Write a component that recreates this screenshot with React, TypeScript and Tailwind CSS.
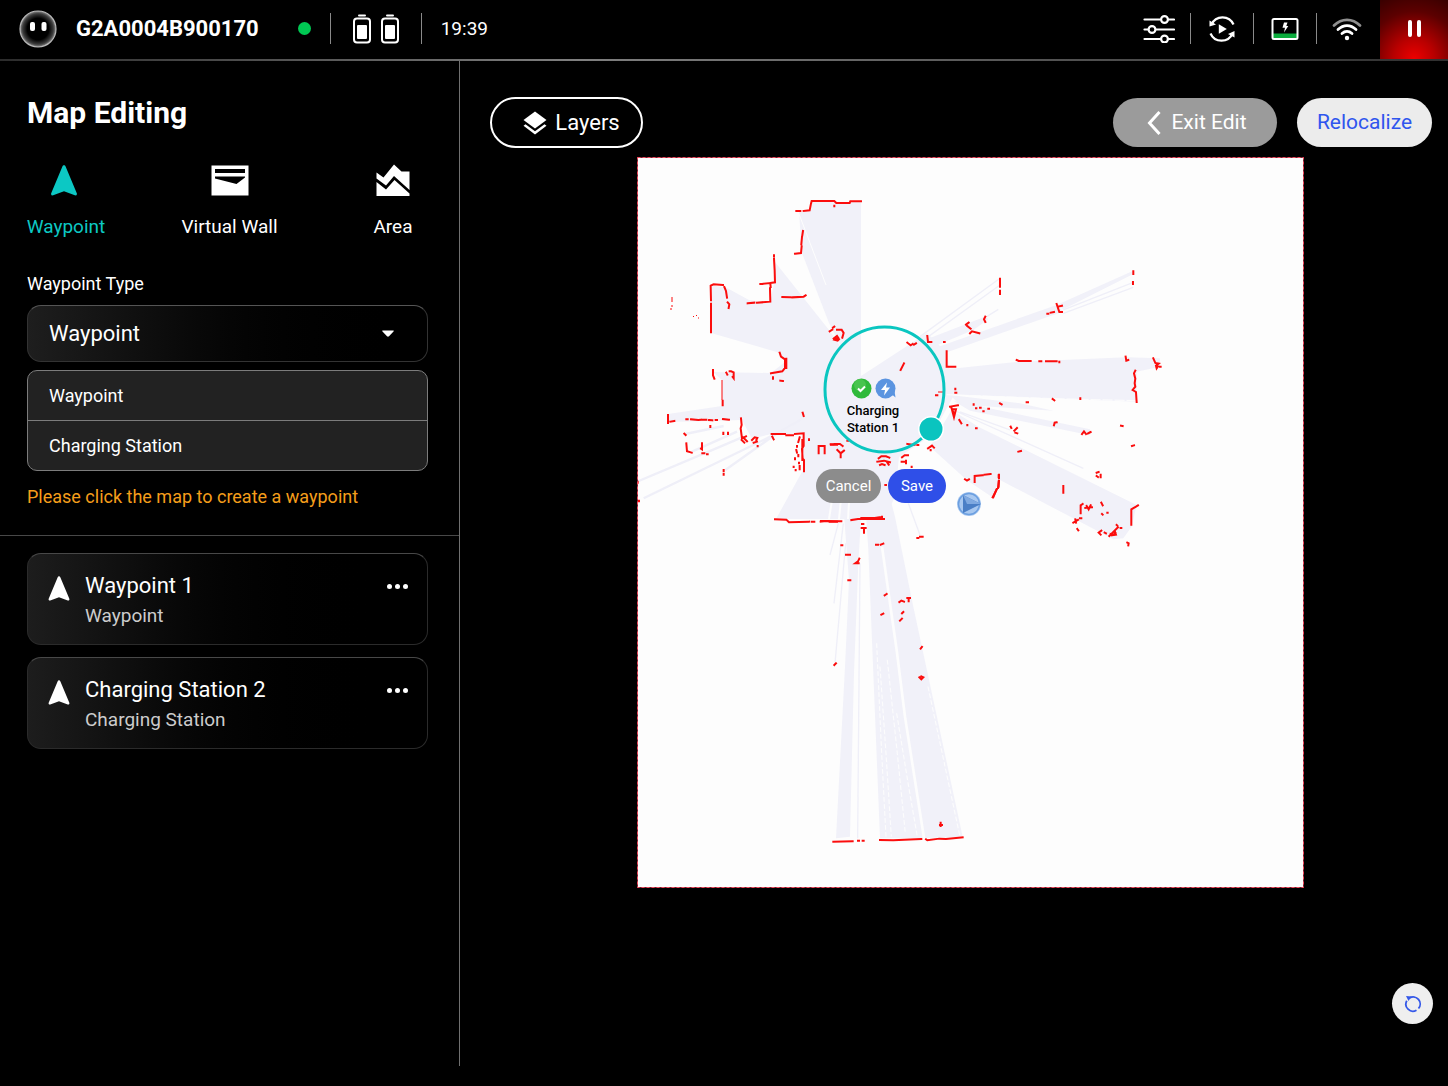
import React, { useState } from "react";

const tabs = ["Waypoint", "Virtual Wall", "Area"];

const waypoints = [
  { name: "Waypoint 1", type: "Waypoint" },
  { name: "Charging Station 2", type: "Charging Station" },
];

// laser hits, one entry per map tile, drawn at a third of their units
const hits = [
  {
    at: "translate(0 0) scale(0.3333)",
    d: "M478 162h12M500 162L518 160L522 140L524 132L592 132L598 138L638 138L640 133L672 133M592 146v2M498 222L496 235M495 240L493 262M494 268L492 288L474 290M411 295v2M411 304L413 340L414 376L400 378M370 381h6M380 380L400 378L401 390M399 394L400 434L360 437M352 437L332 439M436 420L460 421M466 421L500 419L506 415M222 440v86M222 430L221 386L230 382L258 384M262 390L267 402L270 422M272 436L277 442L275 453M578 523l8 -5M588 512l4 -3M600 518h14l6 10l-4 14M590 545l10 -8l4 6l-10 6l8 2l4 -4",
  },
  {
    at: "translate(0 183) scale(0.3333)",
    d: "M228 90v16l4 10M268 98l3 6M278 94h2M285 95l5 2v18l-3 -4M257 182v14M93 225v24M100 245l12 -2M148 238h4M162 238l22 2l8 -1M198 239h10M216 240l10 1M236 240h4M258 237l18 2M220 258v3M142 281l4 4M259 278v4M273 278v4M148 310l2 24l14 4M195 310v18l-3 -2M196 340l6 0M210 343h2M312 235l2 20l-3 10l4 30l12 -6M314 300l8 8M318 292l12 12M345 300l8 -8l8 2l-3 6M350 308l10 -3M362 318v1M260 390v4M260 402v2M404 282h40M448 286h20M474 282l26 -2v38l-5 8l2 30l4 4v34M496 300v60M406 290l4 8M488 292l-4 14M480 318v2M478 330l2 8M484 345v4M474 355v3M486 368v2M470 380v1M476 390v1M488 378v10M497 218l3 10M516 298v2M545 340v-22h18v22M582 314h18M428 38l4 12l12 8v26l-8 10l-34 6M448 56v28M444 60v24M408 112v4M430 122l8 1M414 538l34 1l8 8l60 -2M524 545h8M552 543h20M578 545h22M2 425v3M6 482v2",
  },
  {
    at: "translate(163 153) scale(0.3333)",
    d: "M322 98l10 8l6 -4M342 104l6 -4M302 180l10 -20M440 124v46l26 0M408 256h4M466 236v2M466 248h3M450 290l24 -4M454 292l8 30l6 -24l-12 0l6 12M478 330l6 10M502 345v1M528 355h2M92 403h8M104 402h16l8 6M112 420l10 10l10 -8M122 432v10M142 392h2M322 402l16 2h6M352 405h3M384 415l12 -8l6 6M392 420v1M236 445l8 -6h14l10 4M232 455l20 -3l18 5M240 465l6 -3l8 3M262 458l4 6M306 442l8 -6h10M305 455h8M318 452v8M335 470v1M256 525h2M495 508l6 4l6 -4M524 516v-18l24 -2M554 494l18 -2M597 494v10M596 514l-2 20M590 538l-10 24",
  },
  {
    at: "translate(283 93) scale(0.3333)",
    d: "M22 258l2 18h10M240 86v24M240 122v10M196 200l-4 8l4 8M138 224l8 -6M142 228l10 8M150 250l6 -6l22 6M382 191h3M392 188l10 -2M410 162l8 24l8 0M414 170l12 -3M640 64v8M639 96v6M290 330l6 3h36M358 334h6M378 334h32M418 335v2M617 320l2 12l6 -2M700 325l6 14l10 2l-8 6l2 8l4 -6M720 350h2M646 362l-4 8l4 16l-2 14l2 10l-8 10l10 6l2 30M72 276h2M240 460l5 3M320 457h4M398 447l5 4M481 445v2",
  },
  {
    at: "translate(283 223) scale(0.3333)",
    d: "M161 73v1M180 83h2M168 85h1M190 94h1M205 86h2M272 140l2 4M283 152l8 -8M286 158l6 2M402 136l2 -8l6 -1M486 162l6 -8l6 8M504 160l8 -4M603 137l5 1M636 198l6 -2M295 215l8 -2M530 278l6 -2M530 288l4 3M542 284v8M430 318v20M482 400v-24l6 -4M496 384l20 -2M500 378l6 10l6 -12M544 368l4 8M546 402l2 2M562 398h1M460 428l14 -8M466 418l2 10M480 415h4M472 447l3 4M544 452l-8 6l6 6M554 458l4 2M568 468l16 -16l4 12l-12 2M572 462l10 2l4 -6M584 452l10 -10M590 435l2 2M602 444h2M634 434v-46l14 -8l6 -4M622 488l4 2l-1 6M236 286v6M237 302l-1 18M230 328l-12 24",
  },
  {
    at: "translate(143 343) scale(0.3333)",
    d: "M122 65l16 -2l46 1M214 60l20 -3h78M244 54h40l20 -3M306 50v6M246 72h4M245 84h12M252 88v10M184 136h3M198 164h12M238 176l-4 8l-8 6l10 0M288 134h6M302 134l8 -3M412 114h3M420 110h8M205 241h6M314 286l6 -4M358 306l6 -4l8 3M382 294h8M386 296v8M304 344l6 -3M366 340l4 -4M360 362l6 -6M422 446l4 -5M418 532l6 6l6 -6l-6 -3M163 495l5 -5M482 968v10M480 975h6M160 1025l58 -1M234 1022h3M248 1022h3M300 1020l40 1l84 -4M438 1018l4 3l36 -5l20 1l50 -5",
  },
];

const Arrow = ({ className }: { className?: string }) => (
  <svg viewBox="0 0 26 31" className={className} fill="currentColor" aria-hidden="true">
    <path d="M13 0.3c.8 0 1.300.5 1.600 1.200L25.800 28.200c.500 1.400-.500 2.700-2 2.100L13 26.300 2.200 30.300c-1.500.6-2.500-.7-2-2.100L11.400 1.500C11.700.8 12.200.3 13 .3z" />
  </svg>
);

const VirtualWallIcon = () => (
  <svg viewBox="0 0 38 31" className="h-[31px] w-[38px]" fill="currentColor" aria-hidden="true">
    <path
      fillRule="evenodd"
      d="M0.500 0.500h37v30H0.500zM4 4v4h30v-4zM4 11.500v2l21.500 5.500L34 12.500V11.500z"
    />
  </svg>
);

const AreaIcon = () => (
  <svg viewBox="0 0 34 32" className="h-8 w-[34px]" fill="currentColor" aria-hidden="true">
    <path d="M0.500 8.500L7.500 13.500L18 0.500L25.500 7.500H33.500V26L18 12L10 21.500L0.500 14.500z" />
    <path d="M0.500 18L10 25.500L18.500 16L33.500 29.500V32H0.500z" />
  </svg>
);

const Battery = () => (
  <svg viewBox="0 0 18 30" className="h-[30px] w-[18px]" fill="none" aria-hidden="true">
    <rect x="5" y="0.500" width="8" height="2" rx="1" fill="#fff" />
    <rect x="1" y="4.500" width="16" height="24" rx="3" stroke="#fff" strokeWidth="2" />
    <rect x="4" y="11" width="10" height="14" rx="1" fill="#fff" />
  </svg>
);

const Divider = () => <div className="h-[31px] w-px bg-[#8a8a8a]" />;

const Header = () => (
  <header>
    <div className="flex h-[59px] items-center justify-between pl-[19px]">
      <div className="flex items-center pb-[2px]">
        <svg viewBox="0 0 38 38" className="h-[38px] w-[38px]" role="img" aria-label="Robot">
          <defs>
            <radialGradient id="face">
              <stop offset="0.600" stopColor="#000" />
              <stop offset="0.850" stopColor="#3c3c3c" />
              <stop offset="1" stopColor="#8c8c8c" />
            </radialGradient>
          </defs>
          <circle cx="19" cy="19" r="18" fill="url(#face)" stroke="#b8b8b8" strokeWidth="1.200" />
          <rect x="11" y="12" width="5" height="9" rx="2" fill="#fff" />
          <rect x="22.500" y="12" width="5" height="9" rx="2" fill="#fff" />
        </svg>
        <span className="ml-[19px] text-[22px] font-bold leading-7">G2A0004B900170</span>
        <span className="ml-[39px] mr-[19px] h-[13px] w-[13px] rounded-full bg-[#00c853]" />
        <Divider />
        <div className="mx-[22px] flex gap-[10px]">
          <Battery />
          <Battery />
        </div>
        <Divider />
        <time className="ml-[19px] text-[19px] leading-7">19:39</time>
      </div>

      <div className="flex h-full items-center">
        <div className="flex items-center pb-[2px]">
          <button type="button" aria-label="Settings">
            <svg viewBox="0 0 32 28" className="h-7 w-8" fill="none" stroke="#fff" strokeWidth="2.200" strokeLinecap="round">
              <path d="M1.500 4.500H17M25 4.500H31M1.500 14.500H5M13 14.500H31M1.500 24H17M25 24H31" />
              <circle cx="21.500" cy="4.500" r="3.400" />
              <circle cx="9" cy="14.500" r="3.400" />
              <circle cx="21.500" cy="24" r="3.400" />
            </svg>
          </button>
          <div className="mx-[15px]">
            <Divider />
          </div>
          <button type="button" aria-label="Restart task" className="mx-[3px]">
            <svg viewBox="0 0 26 28" className="h-7 w-[26px]" fill="none" stroke="#fff" strokeWidth="2.200">
              <path d="M2.500 9.500A12 12 0 0 1 24.500 9.500" />
              <path d="M23.500 18.500A12 12 0 0 1 1.500 18.500" />
              <path d="M0.500 5.500V11.500L7 9.500z" fill="#fff" stroke="none" />
              <path d="M25.500 22.500V16L19 19z" fill="#fff" stroke="none" />
              <path d="M9.800 9.300L17.800 14L9.800 18.700z" fill="#fff" stroke="none" />
            </svg>
          </button>
          <div className="mx-[15px]">
            <Divider />
          </div>
          <button type="button" aria-label="Dock status" className="mx-[2px]">
            <svg viewBox="0 0 28 24" className="h-6 w-7" fill="none">
              <rect x="2" y="16.500" width="24" height="5" fill="#0bab3c" />
              <rect x="1.500" y="2" width="25" height="20" rx="1.500" stroke="#fff" strokeWidth="2" />
              <path d="M13 5.500h3.500l-1.200 3.500h2l-4.300 6.500 1-4.800h-2.500z" fill="#fff" />
            </svg>
          </button>
          <div className="mx-[15px]">
            <Divider />
          </div>
          <svg viewBox="0 0 30 24" className="mr-[18px] h-6 w-[30px]" fill="none" strokeWidth="2.800" strokeLinecap="round" role="img" aria-label="Wi-Fi">
            <path d="M2 8.500C9.500 1 20.500 1 28 8.500" stroke="#8f8f8f" />
            <path d="M6 12.500C11.500 7.300 18.500 7.300 24 12.500" stroke="#fff" />
            <path d="M10 16.500C13 13.800 17 13.800 20 16.500" stroke="#fff" />
            <circle cx="15" cy="21" r="2.200" fill="#fff" />
          </svg>
        </div>
        <button
          type="button"
          aria-label="Pause"
          className="flex h-full w-[68px] items-center justify-center gap-[5px] bg-[radial-gradient(circle_at_50%_100%,#ee0000_0%,#b80000_30%,#5c0000_70%,#380000_100%)] pb-[2px]"
        >
          <span className="h-[17px] w-1 rounded-xs bg-white" />
          <span className="h-[17px] w-1 rounded-xs bg-white" />
        </button>
      </div>
    </div>
    <div className="h-[2px] bg-linear-to-r from-[#2c2c2c] via-[#808080] via-40% to-[#303030]" />
  </header>
);

const WaypointCard = ({ name, type }: { name: string; type: string }) => (
  <li className="flex h-[92px] items-start rounded-[14px] border border-[#2b2b2b] border-t-[#484848] bg-linear-to-r from-[#1d1d1d] to-black to-90% pl-5 pr-[19px] pt-[18px]">
    <Arrow className="mt-1 h-[25px] w-[22px]" />
    <div className="ml-[15px] flex-1">
      <h2 className="text-[22px] leading-7">{name}</h2>
      <p className="mt-[2px] text-[19px] leading-7 text-[#cccccc]">{type}</p>
    </div>
    <button type="button" aria-label={`${name} options`} className="mt-3 flex gap-[3px]">
      <span className="h-[5px] w-[5px] rounded-full bg-white" />
      <span className="h-[5px] w-[5px] rounded-full bg-white" />
      <span className="h-[5px] w-[5px] rounded-full bg-white" />
    </button>
  </li>
);

const Sidebar = () => {
  const [tab, setTab] = useState("Waypoint");
  const [type, setType] = useState("Waypoint");

  return (
    <aside className="w-[460px] shrink-0 border-r border-[#707070]">
      <div className="border-b border-[#484848] pb-[26px] pl-[27px] pr-[31px] pt-[34px]">
        <h1 className="text-[30px] font-bold leading-9">Map Editing</h1>

        <div className="-mr-1 mt-8 flex justify-between">
          {tabs.map((item) => (
            <button
              key={item}
              type="button"
              onClick={() => setTab(item)}
              className={`flex w-[78px] flex-col items-center gap-[18px] whitespace-nowrap text-[19px] leading-6 ${
                tab === item ? "text-[#0cc8c4]" : "text-white"
              }`}
            >
              <span className="flex h-[34px] items-center">
                {item === "Waypoint" && <Arrow className="mr-1 h-[31px] w-[26px]" />}
                {item === "Virtual Wall" && <VirtualWallIcon />}
                {item === "Area" && <AreaIcon />}
              </span>
              {item}
            </button>
          ))}
        </div>

        <label htmlFor="type" className="mt-[33px] block text-[18px] leading-6">
          Waypoint Type
        </label>
        <div className="relative mt-[9px]">
          <select
            id="type"
            value={type}
            onChange={(e) => setType(e.target.value)}
            className="block h-[57px] w-full appearance-none rounded-[14px] border border-[#333333] border-t-[#555555] bg-linear-to-r from-[#1e1e1e] to-black px-[21px] text-[22px] text-white focus:outline-none"
          >
            <option>Waypoint</option>
            <option>Charging Station</option>
          </select>
          <svg viewBox="0 0 12 7" className="pointer-events-none absolute right-[34px] top-[25px] h-[7px] w-3" fill="#fff" aria-hidden="true">
            <path d="M1 0.500h10c.8 0 1 .6.500 1.100L7 6.200c-.6.600-1.400.600-2 0L.500 1.600C0 1.100.200.500 1 .5z" />
          </svg>
        </div>

        <ul className="mt-2 divide-y divide-[#7c7c7c] rounded-[10px] border border-[#7c7c7c] bg-[#222222] text-[18px]">
          {["Waypoint", "Charging Station"].map((option) => (
            <li key={option}>
              <button
                type="button"
                onClick={() => setType(option)}
                className="block h-[49px] w-full px-[21px] text-left leading-6"
              >
                {option}
              </button>
            </li>
          ))}
        </ul>

        <p className="mt-[14px] text-[18px] leading-6 text-[#f59e1b]">
          Please click the map to create a waypoint
        </p>
      </div>

      <ul className="mt-[17px] flex flex-col gap-3 pl-[27px] pr-[31px]">
        {waypoints.map((item) => (
          <WaypointCard key={item.name} name={item.name} type={item.type} />
        ))}
      </ul>
    </aside>
  );
};

const ScanMap = () => (
  <svg viewBox="0 0 667 731" className="block w-full" role="img" aria-label="Laser scan map">
    <rect x="1" y="1" width="665" height="729" fill="#fdfdfd" />

    {/* free space */}
    <g fill="#f1f1f9">
      <path d="M162 55L174 53V45H224V228L192 166L165 96z" />
      <path d="M138 105L192 173L224 219L290 176L310 196L313 215L316 240L295 278L262 300L258 340L247 362H139L166 313V277H134L115 282L105 263L31 265V257L85 249V223L76 215L134 216L148 205L143 196L74 176V128L90 131L112 143L133 146L137 126z" />
      <g transform="translate(283 93) scale(0.3333)">
        <path d="M60 360L300 335L620 322L720 325V350L650 365V455L60 432z" />
        <path d="M-20 345L0 310L410 165L430 185L400 195L85 305z" />
        <path d="M410 165L640 62V72L430 178z" />
        <path d="M-10 300L20 268L195 200L205 208L160 240L40 290z" />
      </g>
      <g transform="translate(283 223) scale(0.3333)">
        <path d="M30 200L95 90L175 140L650 375L635 440L610 475L580 478L460 415L240 300L215 350L140 300z" />
        <path d="M100 62L510 148V166L150 92z" />
        <path d="M90 45L300 70L400 92L120 74z" />
      </g>
      <g transform="translate(143 343) scale(0.3333)">
        <path d="M190 20H245L235 190L222 520L210 1010L168 1015L195 500L207 240z" />
        <path d="M255 0H332L345 50L400 320L548 1010L440 1014L300 1015L265 150z" />
      </g>
    </g>

    {/* single rays */}
    <g fill="none" stroke="#efeff8" strokeWidth="4">
      <g transform="translate(283 93) scale(0.3333)">
        <path d="M0 260L240 85M0 278L240 105M430 180L640 97M430 190L640 112M200 200L235 178" />
      </g>
      <g transform="translate(283 223) scale(0.3333)">
        <path d="M100 90L290 175L490 265M120 96L270 150" />
      </g>
      <g transform="translate(0 183) scale(0.3333)">
        <path d="M0 425L250 320L320 290M20 475L400 290L490 240M265 390L420 280M145 282L260 258M165 335L300 275" strokeWidth="7" />
      </g>
      <g transform="translate(143 343) scale(0.3333)">
        <path d="M175 70L150 165M190 70L162 310M197 130L165 490M240 190L233 1015M385 10L420 105" />
      </g>
    </g>
    <g fill="none" stroke="#fdfdfd" strokeWidth="3">
      <path d="M162 57L189 128" strokeWidth="1" />
      <path d="M200 312L192 362M207 312L202 362M213 330L211 362" strokeWidth="2" />
      <g transform="translate(143 343) scale(0.3333)">
        <path d="M306 140L350 450L375 650L432 1014" strokeWidth="8" />
        <path d="M290 430L305 760L318 1010M300 500L318 760L334 1010M322 480L352 760L376 1000M350 640L386 860L412 1010M444 560L540 1010" strokeDasharray="14 7" />
      </g>
      <g transform="translate(283 93) scale(0.3333)">
        <path d="M80 434L400 446L650 452" strokeDasharray="30 6" />
      </g>
    </g>

    <g fill="none" stroke="#fb0d0d">
      {hits.map((tile) => (
        <path key={tile.at} transform={tile.at} d={tile.d} strokeWidth="6" strokeLinecap="square" />
      ))}
      <path d="M85 223V243M35 140v5M35 148v2M33 152h2M56 159l1 1M59 158l1 1M61 161h1M301 235h5" strokeWidth="1" />
    </g>

    <rect x="0.500" y="0.500" width="666" height="730" fill="none" stroke="#6b2530" />
    <rect x="0.500" y="0.500" width="666" height="730" fill="none" stroke="#f0485c" strokeDasharray="3 2" />

    {/* pending waypoint */}
    <ellipse cx="247.500" cy="232.500" rx="59.500" ry="62.500" fill="none" stroke="#0ac6c0" strokeWidth="3" />
    <circle cx="294" cy="272" r="13" fill="#fff" />
    <circle cx="294" cy="272" r="11.500" fill="#0ac4bf" />

    {/* robot pose */}
    <circle cx="332" cy="347" r="12" fill="#a8c8f0" />
    <circle cx="332" cy="347" r="10.500" fill="none" stroke="#6c9fe0" strokeWidth="1.500" />
    <path d="M326 338L344 347L326 356z" fill="#4a7fc6" />
    <path d="M326 338L330 347L344 347z" fill="#7fa9e0" />
  </svg>
);

const MapView = () => (
  <main className="relative flex-1 pl-[30px] pr-4 pt-9">
    <div className="flex items-center gap-5">
      <button
        type="button"
        className="mr-auto flex h-[51px] w-[153px] items-center justify-center gap-2 rounded-full border-2 border-white pl-[10px] text-[22px]"
      >
        <svg viewBox="0 0 24 24" className="h-6 w-6" fill="#fff" aria-hidden="true">
          <path d="M12 0.500L23.500 9L12 17.500L0.500 9z" />
          <path d="M12 20.300L21.500 13.200L23.500 14.800L12 23.500L0.500 14.800L2.500 13.200z" />
        </svg>
        Layers
      </button>
      <button
        type="button"
        className="flex h-[49px] w-[164px] items-center justify-center gap-[10px] rounded-full bg-[#9b9b9b] pl-1 text-[21px]"
      >
        <svg viewBox="0 0 14 24" className="h-6 w-[14px]" fill="none" stroke="#fff" strokeWidth="3" aria-hidden="true">
          <path d="M12.500 1L2.500 12L12.500 23" />
        </svg>
        Exit Edit
      </button>
      <button
        type="button"
        className="h-[49px] w-[135px] rounded-full bg-[#ececec] text-[21px] text-[#2f55ee]"
      >
        Relocalize
      </button>
    </div>

    <div className="mt-[9px] flex justify-center pl-[19px]">
      <div className="relative w-full max-w-[667px]">
        <ScanMap />

        <div className="absolute left-[196px] top-[221px] flex w-20 flex-col items-center text-black">
          <div className="flex gap-[3px]">
            <svg viewBox="0 0 21 21" className="h-[21px] w-[21px]" aria-hidden="true">
              <circle cx="10.500" cy="10.500" r="10" fill="#2fb93a" />
              <circle cx="9" cy="7" r="6" fill="#62cf62" opacity="0.500" />
              <path d="M7 10.500L9.500 13L14 8.500" fill="none" stroke="#fff" strokeWidth="2" />
            </svg>
            <svg viewBox="0 0 21 21" className="h-[21px] w-[21px]" aria-hidden="true">
              <path d="M14 14L20.500 19.500L19 10z" fill="#5b94e0" />
              <circle cx="10.500" cy="10.500" r="10" fill="#5b94e0" />
              <path d="M12 4.500L6 12h4l-1 5.500L15 9.500h-4z" fill="#fff" />
            </svg>
          </div>
          <p className="mt-[3px] text-center text-[13px] font-medium leading-[17px]">
            Charging
            <br />
            Station 1
          </p>
        </div>

        <div className="absolute left-[179px] top-[312px] flex gap-[7px]">
          <button type="button" className="h-[34px] w-[65px] rounded-full bg-[#8c8c8c] text-[15px]">
            Cancel
          </button>
          <button type="button" className="h-[34px] w-[58px] rounded-full bg-[#2f4fe8] text-[15px]">
            Save
          </button>
        </div>
      </div>
    </div>

    <button
      type="button"
      aria-label="Reset view"
      className="absolute bottom-[42px] right-[15px] flex h-[41px] w-[41px] items-center justify-center rounded-full bg-[#efefef]"
    >
      <svg viewBox="0 0 18 18" className="h-[18px] w-[18px]" fill="none" stroke="#3558e8" strokeWidth="1.800" aria-hidden="true">
        <path d="M5.500 3A7 7 0 0 1 14.500 13.500" />
        <path d="M12.500 15.200A7 7 0 0 1 2.800 5.800" />
        <path d="M2 1L7.500 1.500L4.500 6z" fill="#3558e8" stroke="none" />
      </svg>
    </button>
  </main>
);

const App = () => {
  return (
    <div className="flex min-h-screen flex-col bg-black pb-5 font-['Roboto',sans-serif] text-white">
      <Header />
      <div className="flex flex-1">
        <Sidebar />
        <MapView />
      </div>
    </div>
  );
};

export default App;
